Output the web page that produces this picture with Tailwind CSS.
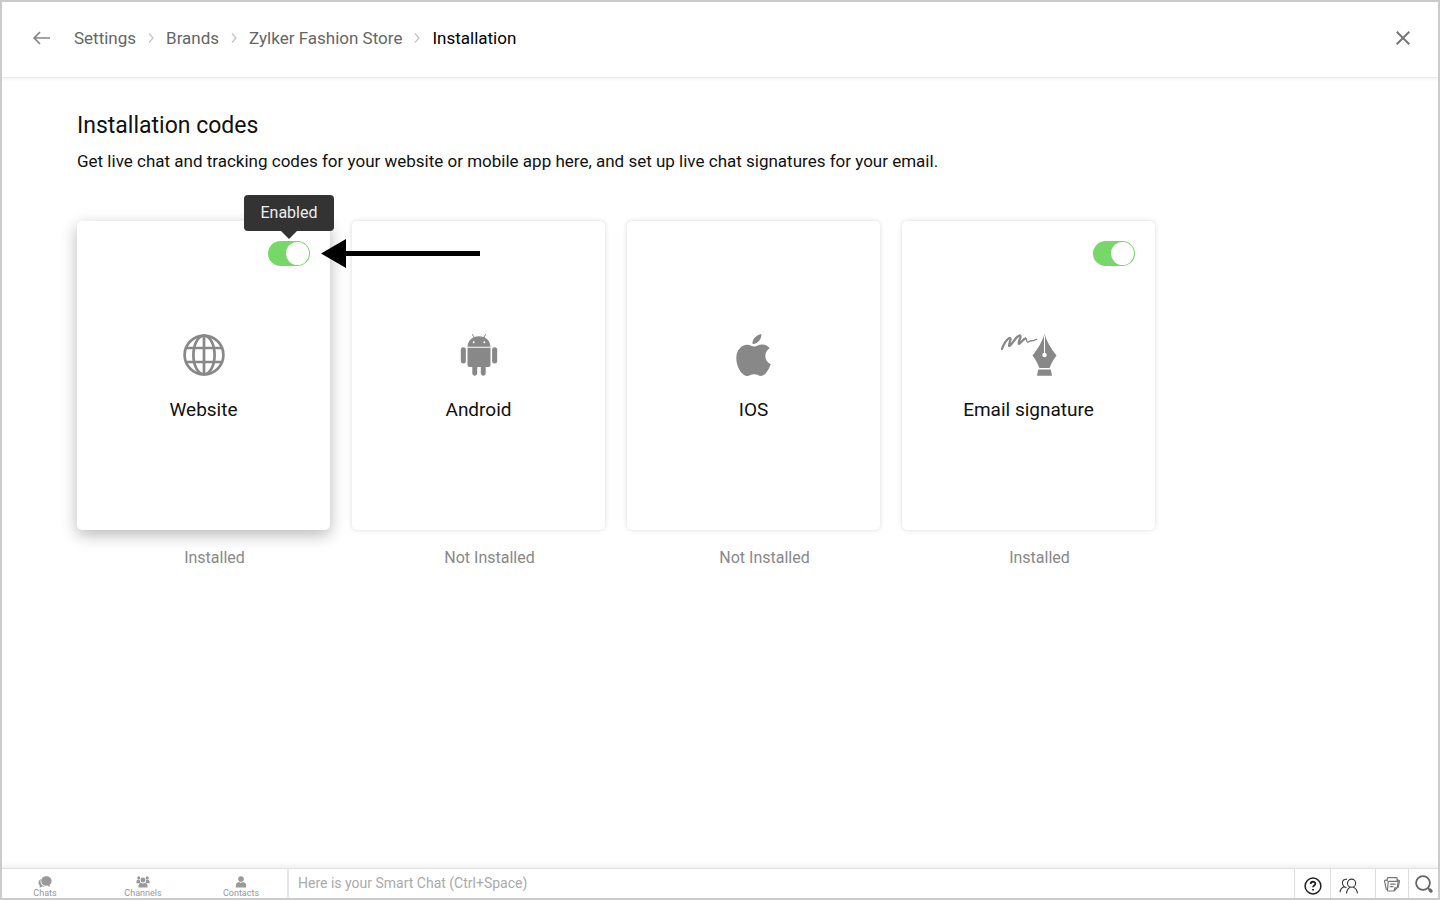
<!DOCTYPE html>
<html lang="en">

<head>
    <meta charset="UTF-8">
    <meta name="viewport" content="width=device-width, initial-scale=1.0">
    <script src="https://cdn.jsdelivr.net/npm/@tailwindcss/browser@4"></script>
    <title>Installation</title>
</head>

<body class="flex min-h-screen flex-col border-2 border-[#cbcbcb] bg-white font-['Roboto',sans-serif] text-[#111]">

    <header class="flex h-[76px] shrink-0 items-center border-b border-[#ececec] pb-1 pr-7 pl-[31px] shadow-[0_1px_3px_rgba(0,0,0,0.07)]">
        <button class="mr-6" aria-label="Back">
            <svg class="h-[14px] w-[17px]" viewBox="0 0 17 14" fill="none" stroke="#858585" stroke-width="1.7">
                <path d="M7 1 1.2 7 7 13M1.2 7H17" />
            </svg>
        </button>
        <nav class="flex items-center gap-[11px] text-[17px] leading-6 text-[#666]" aria-label="Breadcrumb">
            <a href="#">Settings</a>
            <svg class="h-[10px] w-2" viewBox="0 0 8 10" fill="none" stroke="#c4c4c4" stroke-width="1.3"><path d="M2 .5 6 5 2 9.5" /></svg>
            <a href="#">Brands</a>
            <svg class="h-[10px] w-2" viewBox="0 0 8 10" fill="none" stroke="#c4c4c4" stroke-width="1.3"><path d="M2 .5 6 5 2 9.5" /></svg>
            <a href="#">Zylker Fashion Store</a>
            <svg class="h-[10px] w-2" viewBox="0 0 8 10" fill="none" stroke="#c4c4c4" stroke-width="1.3"><path d="M2 .5 6 5 2 9.5" /></svg>
            <a href="#" class="text-black" aria-current="page">Installation</a>
        </nav>
        <button class="ml-auto" aria-label="Close">
            <svg class="h-[14px] w-[14px]" viewBox="0 0 14 14" stroke="#777" stroke-width="2"><path d="M.7.7 13.3 13.3M13.3.7.7 13.3" /></svg>
        </button>
    </header>

    <main class="grow px-[75px] pt-8">
        <h1 class="text-[23px] leading-8">Installation codes</h1>
        <p class="mt-[5px] text-[17px] leading-7">Get live chat and tracking codes for your website or mobile app here, and set up live chat signatures for your email.</p>

        <ul class="mt-[46px] flex flex-wrap">
            <li class="relative w-[275px] text-center">
                <div class="mr-[22px] h-[309px] rounded-[5px] bg-white p-5 shadow-[0_5px_16px_rgba(0,0,0,0.28)]">
                    <div class="flex h-[25px] justify-end">
                        <label class="relative block h-[25px] w-[42px]">
                            <input type="checkbox" checked class="peer h-full w-full appearance-none rounded-full bg-[#ddd] checked:bg-[#78d769]" aria-label="Website enabled">
                            <span class="absolute top-px left-px size-[23px] rounded-full bg-white peer-checked:left-[18px]"></span>
                            <span class="absolute bottom-[35px] left-1/2 flex h-9 w-[90px] -translate-x-1/2 items-center justify-center rounded-[4px] bg-[#333] text-base text-[#eee]" role="tooltip">Enabled
                                <svg class="absolute top-full left-1/2 h-2 w-4 -translate-x-1/2" viewBox="0 0 16 8" fill="#333"><path d="M0 0h16L8 8z" /></svg>
                            </span>
                        </label>
                    </div>
                    <svg class="mx-auto mt-[68px] h-[42px] w-[42px]" viewBox="0 0 42 42" fill="none" stroke="#888" stroke-width="2.7">
                        <circle cx="21" cy="21" r="19.4" />
                        <ellipse cx="21" cy="21" rx="10.6" ry="19.4" />
                        <path d="M21 1.5v39M3.5 14h35M3.5 28h35" />
                    </svg>
                    <h2 class="mt-5 text-[19px] leading-7">Website</h2>
                </div>
                <p class="mt-4 text-base leading-6 text-[#888]">Installed</p>
                <!-- pointer to the toggle -->
                <svg class="absolute top-[18px] left-[244px] z-10 h-[29px] w-[159px]" viewBox="0 0 159 29"><path d="M0 14.5 25 0v12h134v5H25v12z" /></svg>
            </li>
            <li class="w-[275px] text-center">
                <div class="mr-[22px] h-[309px] rounded-[5px] bg-white p-5 shadow-[0_0_5px_rgba(0,0,0,0.15)]">
                    <div class="h-[25px]"></div>
                    <svg class="mx-auto mt-[68px] h-[42px] w-[38px]" viewBox="0 0 38 42" fill="#888">
                        <path d="M7.5 12.7C7.8 8 10.3 5 13.6 3.3L11.8.6l.8-.5 1.9 2.8a14 14 0 0 1 9 0L25.4.1l.8.5-1.8 2.7c3.3 1.7 5.8 4.7 6.1 9.4z" />
                        <circle cx="13.7" cy="8.2" r="1" fill="#fff" />
                        <circle cx="24.3" cy="8.2" r="1" fill="#fff" />
                        <path d="M7.5 13.8h23v17.1c0 1.3-.9 2.2-2.2 2.2h-2.6v6.2c0 3.3-4.9 3.3-4.9 0v-6.2h-3.6v6.2c0 3.3-4.9 3.3-4.9 0v-6.2H9.7a2.1 2.1 0 0 1-2.2-2.2z" />
                        <rect x=".8" y="13.3" width="5.1" height="16.2" rx="2.5" />
                        <rect x="32.1" y="13.3" width="5.1" height="16.2" rx="2.5" />
                    </svg>
                    <h2 class="mt-5 text-[19px] leading-7">Android</h2>
                </div>
                <p class="mt-4 text-base leading-6 text-[#888]">Not Installed</p>
            </li>
            <li class="w-[275px] text-center">
                <div class="mr-[22px] h-[309px] rounded-[5px] bg-white p-5 shadow-[0_0_5px_rgba(0,0,0,0.15)]">
                    <div class="h-[25px]"></div>
                    <svg class="mx-auto mt-[68px] h-[42px] w-[35px]" viewBox="0 0 35 42" fill="#888">
                        <path d="M25.3 0c.7 4.9-3.8 10.2-8.8 9.9C16 5.1 20.5.7 25.3 0z" />
                        <path d="M33.7 14.3c-6.5 4-5.4 13.4 1 15.9C32.7 35.9 28.9 41.9 25.2 41.9c-2.7 0-3.9-1.7-7.1-1.7s-4.5 1.6-7 1.7C5.8 42.1.3 32.6.3 24.2c0-8.2 5.3-13.4 11-13.4 2.9 0 4.9 1.8 7 1.8 2 0 4.4-2 7.9-2 2.9 0 5.8 1.4 7.5 3.7z" />
                    </svg>
                    <h2 class="mt-5 text-[19px] leading-7">IOS</h2>
                </div>
                <p class="mt-4 text-base leading-6 text-[#888]">Not Installed</p>
            </li>
            <li class="w-[275px] text-center">
                <div class="mr-[22px] h-[309px] rounded-[5px] bg-white p-5 shadow-[0_0_5px_rgba(0,0,0,0.15)]">
                    <div class="flex h-[25px] justify-end">
                        <label class="relative block h-[25px] w-[42px]">
                            <input type="checkbox" checked class="peer h-full w-full appearance-none rounded-full bg-[#ddd] checked:bg-[#78d769]" aria-label="Email signature enabled">
                            <span class="absolute top-px left-px size-[23px] rounded-full bg-white peer-checked:left-[18px]"></span>
                        </label>
                    </div>
                    <svg class="mx-auto mt-[68px] h-[42px] w-[56px]" viewBox="0 0 56 42" fill="#888">
                        <g fill="none" stroke="#888" stroke-linecap="round" stroke-linejoin="round">
                            <path d="M1 15C2.500 10.500 6 4.500 8.800 3.800c2.200.3-1.600 7-.6 8.200C10 12.800 15 1.500 18.800 1.300c2.300.5-2 7.200-1 8.400 1.500.8 4-5 6.700-5.200" stroke-width="2.300" />
                            <path d="M24.500 4.500c2 .1.300 3.400 2.100 3.600 1.500 0 2.200-1.500 3.500-1.500 1.700.3 2 .4 5.600-1.300" stroke-width="1.400" />
                        </g>
                        <path d="M43.5 0c2.3 7.5 6.400 14.600 12 21.400-3 3.900-5.300 8-6.900 12.600H38.400c-1.600-4.600-3.900-8.700-6.900-12.600C37.100 14.600 41.200 7.500 43.500 0z" />
                        <path d="M37.200 35.6h12.600l1.200 6.200H36z" />
                        <path d="M43.500 1.500v20" stroke="#fff" stroke-width="1" />
                        <circle cx="43.500" cy="21" r="2.200" fill="#fff" />
                    </svg>
                    <h2 class="mt-5 text-[19px] leading-7">Email signature</h2>
                </div>
                <p class="mt-4 text-base leading-6 text-[#888]">Installed</p>
            </li>
        </ul>
    </main>

    <footer class="flex h-[30px] shrink-0 border-t border-[#e2e2e2] text-[#999] shadow-[0_-2px_6px_rgba(0,0,0,0.08)]">
        <nav class="flex w-[287px] shrink-0 border-r-2 border-[#e6e6e6] pr-px text-[9px] leading-[10px]">
            <a href="#" class="flex w-[86px] flex-col items-center pt-[7px]">
                <svg class="h-[14px] w-4" viewBox="0 0 16 14" fill="#999">
                    <path d="M9.5.3c3.600 0 6.200 2.400 6.200 5.400 0 2-1 3.500-2.500 4.500l.8 2.700-3.400-1.700C6.700 11.600 3.600 9.200 3.600 5.700 3.600 2.700 6.100.3 9.500.3z" />
                    <path d="M3.300 3.400C-.5 5.500-.1 9.400 2 11l-.3 2.700L5 12.300c1 .2 2 .1 2.700-.1C3.800 11.200 1.700 7.600 3.300 3.400z" />
                </svg>
                <span>Chats</span>
            </a>
            <a href="#" class="flex w-[110px] flex-col items-center pt-[7px]">
                <svg class="h-[14px] w-4" viewBox="0 0 16 14" fill="#999">
                    <circle cx="3" cy="2.200" r="1.800" /><circle cx="13" cy="2.200" r="1.800" /><circle cx="8" cy="4.700" r="2.900" />
                    <path d="M.3 8.500V6.600C.3 4.500 2 4.300 4.400 4.600c-.1 1.700.4 2.700 1.200 3.400l-.8.500zM15.700 8.500V6.600c0-2.100-1.700-2.300-4.100-2 .1 1.700-.4 2.700-1.200 3.400l.8.500zM2.700 13.300v-1.500c0-2.300 1.600-3.500 3.600-3.500 1.100.7 2.300.7 3.400 0 2 0 3.600 1.200 3.600 3.500v1.500z" />
                </svg>
                <span>Channels</span>
            </a>
            <a href="#" class="flex w-[86px] flex-col items-center pt-[7px]">
                <svg class="h-[14px] w-4" viewBox="0 0 16 14" fill="#999">
                    <circle cx="8" cy="3.500" r="3.300" />
                    <path d="M2 13.400v-2.200C2 8.700 3.400 7.400 5.400 7c1.700 1 3.500 1 5.200 0 2 .4 3.400 1.700 3.400 4.200v2.200z" />
                </svg>
                <span>Contacts</span>
            </a>
        </nav>
        <input type="text" class="min-w-0 grow px-[9px] text-[14px] outline-none placeholder:text-[#aaa]" placeholder="Here is your Smart Chat (Ctrl+Space)" aria-label="Smart Chat">
        <div class="flex shrink-0 items-stretch">
            <button class="flex w-9 items-center justify-center border-l border-[#ddd] pt-1" aria-label="Help">
                <svg class="size-[18px]" viewBox="0 0 18 18" fill="none" stroke="#222" stroke-width="1.5">
                    <circle cx="9" cy="9" r="7.900" />
                    <path d="M6.700 7c0-3 4.600-2.900 4.600-.2 0 1.600-2.300 1.700-2.300 3.500M9 12v1.600" stroke-width="1.800" />
                </svg>
            </button>
            <button class="flex w-[45px] items-center border-l border-[#ddd] pt-1 pl-2" aria-label="People">
                <svg class="h-4 w-5" viewBox="0 0 20 16" fill="none" stroke="#333" stroke-width="1.1">
                    <circle cx="12.600" cy="5.200" r="4.100" />
                    <path d="M7.500 15.400c.2-3.200 1.500-5 3.600-6.200M14.300 9.200c2.500 1 3.800 2.900 4.200 6.200M8 1.400C5.200.8 3.400 2.500 3.400 5c0 1.500.6 2.800 1.900 3.600C2.700 9.700 1.300 11.400 1 14.200M5.300 8.700l2.200 1" />
                </svg>
            </button>
            <button class="flex w-[33px] items-center justify-center border-l border-[#ddd] pt-px" aria-label="Notes">
                <svg class="h-[15px] w-4" viewBox="0 0 16 15" fill="none" stroke="#777" stroke-width="1.2">
                    <path d="M4.800 4.300h8.600c.5 0 .8.300.7.800l-.9 5.700-3 3.200H4.200c-.5 0-.8-.300-.7-.800L4.200 5c0-.4.2-.7.600-.7zM10.200 13.800l.5-3h2.500M6.100 7.200h5.600M5.700 9.700h3.700" />
                    <path d="M3.300 12.500l-1-.3L.6 4.300c-.1-.5.1-.8.5-.9l2-.5M3.300 4.300V1.500c0-.5.3-.8.8-.8h8.200c.5 0 .8.300.8.800v2.600M13.300 2.900l1.600.5c.4.100.6.400.5.900l-1.300 6.500" />
                </svg>
            </button>
            <button class="flex w-[30px] items-center justify-center border-l border-[#ddd] pl-px" aria-label="Search">
                <svg class="size-[18px]" viewBox="0 0 18 18" fill="none" stroke="#666">
                    <circle cx="8" cy="8" r="6.900" stroke-width="1.800" />
                    <path d="m13 13 1.500 1.500" stroke-width="1.500" />
                    <path d="m15 15 1.100 1.100" stroke-width="3.200" stroke-linecap="round" />
                </svg>
            </button>
        </div>
    </footer>

</body>

</html>
